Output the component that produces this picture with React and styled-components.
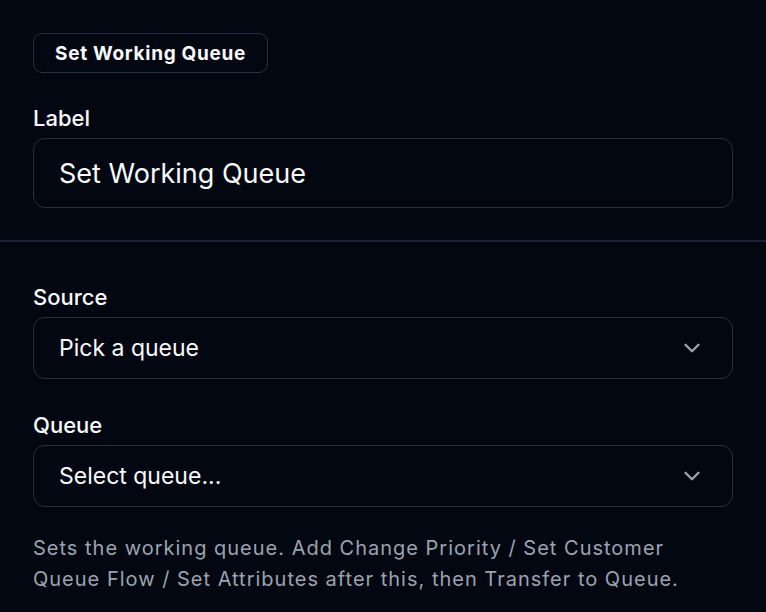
import React from 'react';
import styled, { createGlobalStyle } from 'styled-components';

const GlobalStyle = createGlobalStyle`
  html, body {
    margin: 0;
    padding: 0;
    background: #030712;
  }
  body {
    font-family: Inter, "Noto Sans", sans-serif;
    color: #f9fafb;
    -webkit-font-smoothing: antialiased;
  }
`;

const Panel = styled.div`
  width: 766px;
  height: 612px;
  background: #030712;
  overflow: hidden;
`;

const Section = styled.section`
  display: flex;
  flex-direction: column;
  padding: ${(p) => p.$pad || '33px 33px 0'};
`;

const Badge = styled.span`
  align-self: flex-start;
  display: inline-flex;
  align-items: center;
  height: 38px;
  padding: 0 21px;
  border: 1px solid #263041;
  border-radius: 9px;
  font-size: 19px;
  font-weight: 700;
  letter-spacing: 0.7px;
  color: #f9fafb;
`;

const Label = styled.label`
  display: block;
  font-size: 22px;
  font-weight: 500;
  line-height: 28px;
  color: #f9fafb;
  margin-top: ${(p) => p.$top || '0'};
  margin-bottom: 6px;
`;

const TextInput = styled.div`
  height: 68px;
  display: flex;
  align-items: center;
  padding: 0 25px;
  border: 1px solid #263041;
  border-radius: 12px;
  font-size: 27px;
  color: #f9fafb;
`;

const Divider = styled.hr`
  border: none;
  border-top: 2px solid #1c2230;
  margin: 32px 0 0;
`;

const Select = styled.div`
  height: 60px;
  display: flex;
  align-items: center;
  justify-content: space-between;
  padding: 0 27px 0 25px;
  border: 1px solid #263041;
  border-radius: 12px;
  font-size: 23px;
  color: #f9fafb;
  svg {
    color: #9ca3af;
  }
`;

const Help = styled.p`
  margin: 26px 0 0;
  font-size: 20px;
  line-height: 31px;
  letter-spacing: 1px;
  color: #9ca3af;
`;

const Chevron = () => (
  <svg width="26" height="26" viewBox="0 0 24 24" fill="none" stroke="currentColor" strokeWidth="2.2" strokeLinecap="round" strokeLinejoin="round">
    <path d="M6 9l6 6 6-6" />
  </svg>
);

export default function App() {
  return (
    <Panel>
      <GlobalStyle />
      <Section>
        <Badge>Set Working Queue</Badge>
        <Label $top="31px">Label</Label>
        <TextInput>Set Working Queue</TextInput>
      </Section>
      <Divider />
      <Section $pad="41px 33px 0">
        <Label>Source</Label>
        <Select>
          Pick a queue
          <Chevron />
        </Select>
        <Label $top="32px">Queue</Label>
        <Select>
          Select queue...
          <Chevron />
        </Select>
        <Help>
          Sets the working queue. Add Change Priority / Set Customer Queue Flow / Set Attributes after this, then Transfer to Queue.
        </Help>
      </Section>
    </Panel>
  );
}
